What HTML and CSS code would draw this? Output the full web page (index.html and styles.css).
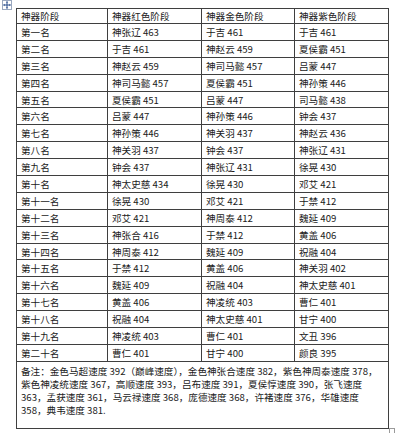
FILE: index.html
```html
<!DOCTYPE html>
<html lang="zh-CN">
<head>
<meta charset="utf-8">
<title>神器阶段排名</title>
<link rel="stylesheet" href="styles.css">
</head>
<body>
<div class="page">
  <span class="move-handle">
    <svg width="10" height="10" viewBox="0 0 10 10">
      <rect x="0.5" y="0.5" width="9" height="9" fill="#fff" stroke="#9aa8bf"/>
      <path d="M5 1.5 V8.5 M1.5 5 H8.5" stroke="#2b4f8c" stroke-width="1"/>
      <path d="M5 1.2 L3.8 2.6 H6.2 Z M5 8.8 L3.8 7.4 H6.2 Z M1.2 5 L2.6 3.8 V6.2 Z M8.8 5 L7.4 3.8 V6.2 Z" fill="#2b4f8c"/>
    </svg>
  </span>
  <table class="rank">
    <colgroup>
      <col class="c1"><col class="c2"><col class="c3"><col class="c4">
    </colgroup>
    <tr class="head"><td>神器阶段</td><td>神器红色阶段</td><td>神器金色阶段</td><td>神器紫色阶段</td></tr>
    <tr><td>第一名</td><td>神张辽 463</td><td>于吉 461</td><td>于吉 461</td></tr>
    <tr><td>第二名</td><td>于吉 461</td><td>神赵云 459</td><td>夏侯霸 451</td></tr>
    <tr><td>第三名</td><td>神赵云 459</td><td>神司马懿 457</td><td>吕蒙 447</td></tr>
    <tr><td>第四名</td><td>神司马懿 457</td><td>夏侯霸 451</td><td>神孙策 446</td></tr>
    <tr><td>第五名</td><td>夏侯霸 451</td><td>吕蒙 447</td><td>司马懿 438</td></tr>
    <tr><td>第六名</td><td>吕蒙 447</td><td>神孙策 446</td><td>钟会 437</td></tr>
    <tr><td>第七名</td><td>神孙策 446</td><td>神关羽 437</td><td>神赵云 436</td></tr>
    <tr><td>第八名</td><td>神关羽 437</td><td>钟会 437</td><td>神张辽 431</td></tr>
    <tr><td>第九名</td><td>钟会 437</td><td>神张辽 431</td><td>徐晃 430</td></tr>
    <tr><td>第十名</td><td>神太史慈 434</td><td>徐晃 430</td><td>邓艾 421</td></tr>
    <tr><td>第十一名</td><td>徐晃 430</td><td>邓艾 421</td><td>于禁 412</td></tr>
    <tr><td>第十二名</td><td>邓艾 421</td><td>神周泰 412</td><td>魏延 409</td></tr>
    <tr><td>第十三名</td><td>神张合 416</td><td>于禁 412</td><td>黄盖 406</td></tr>
    <tr><td>第十四名</td><td>神周泰 412</td><td>魏延 409</td><td>祝融 404</td></tr>
    <tr><td>第十五名</td><td>于禁 412</td><td>黄盖 406</td><td>神关羽 402</td></tr>
    <tr><td>第十六名</td><td>魏延 409</td><td>祝融 404</td><td>神太史慈 401</td></tr>
    <tr><td>第十七名</td><td>黄盖 406</td><td>神凌统 403</td><td>曹仁 401</td></tr>
    <tr><td>第十八名</td><td>祝融 404</td><td>神太史慈 401</td><td>甘宁 400</td></tr>
    <tr><td>第十九名</td><td>神凌统 403</td><td>曹仁 401</td><td>文丑 396</td></tr>
    <tr><td>第二十名</td><td>曹仁 401</td><td>甘宁 400</td><td>颜良 395</td></tr>
    <tr class="note"><td colspan="4">备注：金色马超速度 392（巅峰速度），金色神张合速度 382，紫色神周泰速度 378，<br>紫色神凌统速度 367，高顺速度 393，吕布速度 391，夏侯惇速度 390，张飞速度<br>363，孟获速度 361，马云禄速度 368，庞德速度 368，许褚速度 376，华雄速度<br>358，典韦速度 381.</td></tr>
  </table>
  <span class="resize-handle"></span>
</div>
</body>
</html>
```

FILE: styles.css
```css
html, body {
  margin: 0;
  padding: 0;
  background: #ffffff;
}

.page {
  position: relative;
  width: 400px;
  height: 433px;
  padding: 8px 0 0 16px;
  box-sizing: border-box;
  font-family: "Noto Sans CJK SC", "Noto Sans", sans-serif;
  font-size: 9.6px;
  color: #1a1a1a;
}

.move-handle {
  position: absolute;
  left: 2px;
  top: 0;
  width: 10px;
  height: 10px;
  line-height: 0;
}

.resize-handle {
  position: absolute;
  left: 389px;
  top: 428px;
  width: 4px;
  height: 4px;
  border: 1px solid #9a9a9a;
  background: #fff;
}

.rank {
  border-collapse: collapse;
  table-layout: fixed;
  width: 372px;
}

.c1 { width: 91px; }
.c2 { width: 94px; }
.c3 { width: 93px; }
.c4 { width: 94px; }

.rank td {
  border: 1px solid #3f3f3f;
  padding: 0 0 0 4px;
  height: 15.9px;
  line-height: 14px;
  white-space: nowrap;
  vertical-align: middle;
}

.rank .head td {
  height: 14px;
}

.rank .note td {
  height: 63px;
  padding: 3px 0 0 4px;
  line-height: 13.2px;
  vertical-align: top;
}
```
